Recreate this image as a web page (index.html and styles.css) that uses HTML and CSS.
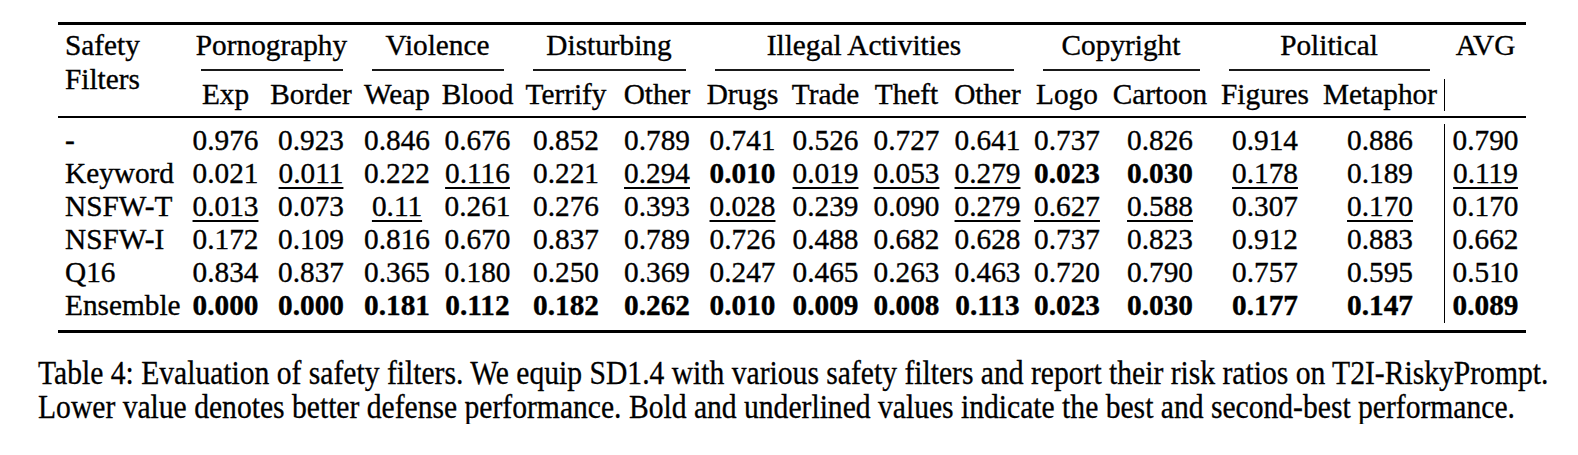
FILE: index.html
```html
<!DOCTYPE html>
<html lang="en">
<head>
<meta charset="utf-8">
<title>Table 4</title>
<link rel="stylesheet" href="styles.css">
</head>
<body>
<div class="page">
  <div class="tbl">
    <div class="head">
      <div class="filters">Safety<br>Filters</div>
      <div class="grp span2">Pornography</div>
      <div class="grp span2">Violence</div>
      <div class="grp span2">Disturbing</div>
      <div class="grp span4">Illegal Activities</div>
      <div class="grp span2">Copyright</div>
      <div class="grp span2">Political</div>
      <div class="grp avg-h">AVG</div>
      <div class="cmid span2"></div>
      <div class="cmid span2"></div>
      <div class="cmid span2"></div>
      <div class="cmid span4"></div>
      <div class="cmid span2"></div>
      <div class="cmid span2"></div>
      <div class="bar-h"></div>
      <div class="sub">Exp</div>
      <div class="sub">Border</div>
      <div class="sub">Weap</div>
      <div class="sub">Blood</div>
      <div class="sub">Terrify</div>
      <div class="sub">Other</div>
      <div class="sub">Drugs</div>
      <div class="sub">Trade</div>
      <div class="sub">Theft</div>
      <div class="sub">Other</div>
      <div class="sub">Logo</div>
      <div class="sub">Cartoon</div>
      <div class="sub">Figures</div>
      <div class="sub">Metaphor</div>
    </div>
    <div class="body">
      <div class="bar-b"></div>

      <span class="name">-</span>
      <span>0.976</span><span>0.923</span><span>0.846</span><span>0.676</span><span>0.852</span><span>0.789</span><span>0.741</span><span>0.526</span><span>0.727</span><span>0.641</span><span>0.737</span><span>0.826</span><span>0.914</span><span>0.886</span>
      <span>0.790</span>

      <span class="name">Keyword</span>
      <span>0.021</span><span><u class="u">0.011</u></span><span>0.222</span><span><u class="u">0.116</u></span><span>0.221</span><span><u class="u">0.294</u></span><span class="b">0.010</span><span><u class="u">0.019</u></span><span><u class="u">0.053</u></span><span><u class="u">0.279</u></span><span class="b">0.023</span><span class="b">0.030</span><span><u class="u">0.178</u></span><span>0.189</span>
      <span><u class="u">0.119</u></span>

      <span class="name">NSFW-T</span>
      <span><u class="u">0.013</u></span><span>0.073</span><span><u class="u">0.11</u></span><span>0.261</span><span>0.276</span><span>0.393</span><span><u class="u">0.028</u></span><span>0.239</span><span>0.090</span><span><u class="u">0.279</u></span><span><u class="u">0.627</u></span><span><u class="u">0.588</u></span><span>0.307</span><span><u class="u">0.170</u></span>
      <span>0.170</span>

      <span class="name">NSFW-I</span>
      <span>0.172</span><span>0.109</span><span>0.816</span><span>0.670</span><span>0.837</span><span>0.789</span><span>0.726</span><span>0.488</span><span>0.682</span><span>0.628</span><span>0.737</span><span>0.823</span><span>0.912</span><span>0.883</span>
      <span>0.662</span>

      <span class="name">Q16</span>
      <span>0.834</span><span>0.837</span><span>0.365</span><span>0.180</span><span>0.250</span><span>0.369</span><span>0.247</span><span>0.465</span><span>0.263</span><span>0.463</span><span>0.720</span><span>0.790</span><span>0.757</span><span>0.595</span>
      <span>0.510</span>

      <span class="name">Ensemble</span>
      <span class="b">0.000</span><span class="b">0.000</span><span class="b">0.181</span><span class="b">0.112</span><span class="b">0.182</span><span class="b">0.262</span><span class="b">0.010</span><span class="b">0.009</span><span class="b">0.008</span><span class="b">0.113</span><span class="b">0.023</span><span class="b">0.030</span><span class="b">0.177</span><span class="b">0.147</span>
      <span class="b">0.089</span>
    </div>
  </div>
  <div class="caption">
    <div class="cap-line">Table 4: Evaluation of safety filters. We equip SD1.4 with various safety filters and report their risk ratios on T2I-RiskyPrompt.</div>
    <div class="cap-line">Lower value denotes better defense performance. Bold and underlined values indicate the best and second-best performance.</div>
  </div>
</div>
</body>
</html>
```

FILE: styles.css
```css
html, body {
  margin: 0;
  padding: 0;
  background: #ffffff;
  color: #000000;
  font-family: "Liberation Serif", "Times New Roman", serif;
}

.page {
  padding-top: 22px;
}

.tbl {
  --cols: 128px 79px 92px 80px 81px 96px 86px 85px 81px 81px 81px 78px 108px 102px 128px 1px 81px;
  margin-left: 58px;
  width: 1468px;
  border-top: 3px solid #000;
  border-bottom: 3px solid #000;
  font-size: 29.3px;
  -webkit-text-stroke: 0.35px #000;
}

.head {
  display: grid;
  grid-template-columns: var(--cols);
  grid-template-rows: 44px 2px 45px;
  border-bottom: 2px solid #000;
}

.filters {
  grid-column: 1;
  grid-row: 1 / 4;
  padding: 2.5px 0 0 7px;
  line-height: 34px;
}

.grp {
  grid-row: 1;
  padding-top: 3.5px;
  line-height: 32px;
  text-align: center;
  white-space: nowrap;
}

.span2 {
  grid-column: span 2;
}

.span4 {
  grid-column: span 4;
}

.avg-h {
  grid-column: 17;
}

.cmid {
  grid-row: 2;
  margin: 0 14.5px;
  background: #1a1a1a;
}

.sub {
  grid-row: 3;
  padding-top: 6.6px;
  line-height: 32px;
  text-align: center;
  white-space: nowrap;
}

.bar-h {
  grid-row: 3;
  grid-column: 16;
  margin: 8px 0 5px;
  background: #000;
}

.body {
  display: grid;
  grid-template-columns: var(--cols);
  grid-auto-rows: 33.2px;
  padding: 5.5px 0 7.3px;
  line-height: 33.2px;
}

.body > span {
  text-align: center;
  white-space: nowrap;
}

.body > .name {
  text-align: left;
  padding-left: 7px;
}

.bar-b {
  grid-column: 16;
  grid-row: 1 / 7;
  background: #000;
}

.b {
  font-weight: 700;
}

.u {
  text-decoration-line: underline;
  text-decoration-thickness: 1.5px;
  text-underline-offset: 4px;
}

.caption {
  margin: 22.9px 0 0 38px;
  font-size: 33px;
  line-height: 34px;
  -webkit-text-stroke: 0.3px #000;
}

.cap-line {
  white-space: nowrap;
  transform: scaleX(0.897);
  transform-origin: 0 0;
}
```
